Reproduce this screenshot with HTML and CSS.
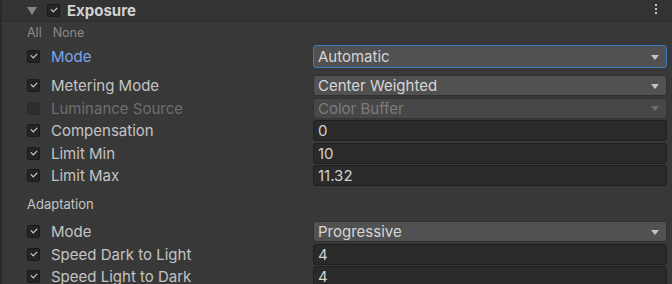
FILE: index.html
```html
<!DOCTYPE html>
<html lang="en">
<head>
    <meta charset="UTF-8">
    <title>Exposure</title>
    <link rel="stylesheet" href="styles.css">
</head>
<body>
    <div class="inspector">
        <div class="header">
            <span class="foldout"></span>
            <span class="check on"></span>
            <span class="title">Exposure</span>
            <span class="menu"><i></i><i></i><i></i></span>
        </div>

        <div class="links"><span>All</span><span>None</span></div>

        <div class="row first">
            <span class="check on"></span>
            <span class="label modified">Mode</span>
            <div class="dropdown focused">Automatic<span class="arrow"></span></div>
        </div>

        <div class="row spaced">
            <span class="check on"></span>
            <span class="label">Metering Mode</span>
            <div class="dropdown">Center Weighted<span class="arrow"></span></div>
        </div>
        <div class="row">
            <span class="check off"></span>
            <span class="label disabled">Luminance Source</span>
            <div class="dropdown disabled">Color Buffer<span class="arrow"></span></div>
        </div>
        <div class="row">
            <span class="check on"></span>
            <span class="label">Compensation</span>
            <div class="textfield">0</div>
        </div>
        <div class="row">
            <span class="check on"></span>
            <span class="label">Limit Min</span>
            <div class="textfield">10</div>
        </div>
        <div class="row">
            <span class="check on"></span>
            <span class="label">Limit Max</span>
            <div class="textfield">11.32</div>
        </div>

        <div class="section">Adaptation</div>

        <div class="row">
            <span class="check on"></span>
            <span class="label">Mode</span>
            <div class="dropdown">Progressive<span class="arrow"></span></div>
        </div>
        <div class="row">
            <span class="check on"></span>
            <span class="label">Speed Dark to Light</span>
            <div class="textfield">4</div>
        </div>
        <div class="row">
            <span class="check on"></span>
            <span class="label">Speed Light to Dark</span>
            <div class="textfield">4</div>
        </div>
    </div>
</body>
</html>
```

FILE: styles.css
```css
body {
    margin: 0;
    background-color: #383838;
    font-family: Inter, "Noto Sans", sans-serif;
    color: #c4c4c4;
    overflow: hidden;
}
.inspector {
    border-left: 2px solid #2a2a2a;
    height: 284px;
}
.header {
    display: flex;
    align-items: center;
    height: 21px;
    background-color: #333333;
    border-bottom: 1px solid #2e2e2e;
    position: relative;
}
.foldout {
    width: 0;
    height: 0;
    margin-left: 25px;
    border-left: 5px solid transparent;
    border-right: 5px solid transparent;
    border-top: 8px solid #858585;
}
.header .check {
    margin-left: 10px;
}
.title {
    margin-left: 7px;
    font-weight: bold;
    font-size: 15px;
    color: #d2d2d2;
}
.menu {
    position: absolute;
    right: 15px;
    top: 4px;
    display: flex;
    flex-direction: column;
    gap: 2px;
}
.menu i {
    width: 2px;
    height: 2px;
    background: #c8c8c8;
}
.check {
    box-sizing: border-box;
    width: 13px;
    height: 13px;
    border: 1px solid #191919;
    border-radius: 2px;
    background-color: #242424;
    position: relative;
    flex-shrink: 0;
}
.check.on::after {
    content: "";
    position: absolute;
    left: 3px;
    top: 2px;
    width: 5px;
    height: 3px;
    border-left: 1.5px solid #d8d8d8;
    border-bottom: 1.5px solid #d8d8d8;
    transform: rotate(-45deg);
}
.check.off {
    background-color: #2e2e2e;
    border-color: #2a2a2a;
}
.links {
    display: flex;
    gap: 11px;
    margin: 3px 0 0 25px;
    font-size: 12.5px;
    color: #8a8a8a;
    height: 15px;
    line-height: 15px;
}
.row {
    display: flex;
    align-items: center;
    height: 21px;
    margin-bottom: 1.5px;
    padding-left: 25px;
    font-size: 15px;
}
.row.first {
    margin-top: 5px;
    height: 23px;
}
.row.spaced {
    margin-top: 7px;
}
.label {
    width: 262px;
    margin-left: 11px;
    white-space: nowrap;
}
.label.modified {
    color: #7aa6ee;
}
.label.disabled {
    color: #6f6f6f;
}
.dropdown,
.textfield {
    box-sizing: border-box;
    width: 354px;
    height: 100%;
    border-radius: 3px;
    padding-left: 4px;
    display: flex;
    align-items: center;
    position: relative;
}
.dropdown {
    background-color: #515151;
    border: 1px solid #303030;
    color: #d6d6d6;
}
.dropdown.focused {
    border-color: #3a7ac0;
}
.dropdown.disabled {
    background-color: #474747;
    color: #7c7c7c;
    border-color: #343434;
}
.arrow {
    position: absolute;
    right: 7px;
    top: 50%;
    margin-top: -2px;
    width: 0;
    height: 0;
    border-left: 4px solid transparent;
    border-right: 4px solid transparent;
    border-top: 5px solid #c4c4c4;
}
.dropdown.disabled .arrow {
    border-top-color: #6f6f6f;
}
.textfield {
    background-color: #2a2a2a;
    border: 1px solid #1f1f1f;
    color: #d2d2d2;
}
.section {
    margin: 11px 0 10px 25px;
    font-size: 13px;
    height: 14px;
    line-height: 14px;
    color: #c4c4c4;
}
```
